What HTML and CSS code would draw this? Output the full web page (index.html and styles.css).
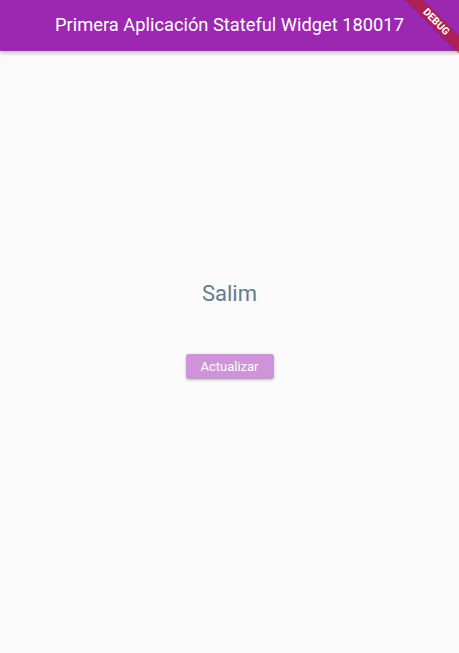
FILE: index.html
```html
<!DOCTYPE html>
<html lang="es">
<head>
<meta charset="utf-8">
<title>Primera Aplicación Stateful Widget 180017</title>
<link rel="stylesheet" href="styles.css">
</head>
<body>
<div class="app">
  <header class="appbar">
    <h1 class="title">Primera Aplicación Stateful Widget 180017</h1>
  </header>
  <main class="content">
    <p class="name">Salim</p>
    <button class="btn" type="button">Actualizar</button>
  </main>
  <div class="banner"><span>DEBUG</span></div>
</div>
</body>
</html>
```
FILE: styles.css
```css
* { box-sizing: border-box; }
html, body {
  margin: 0;
  padding: 0;
  height: 100%;
}
body {
  background: #fafafa;
  font-family: Roboto, "Noto Sans", sans-serif;
  overflow: hidden;
}
.app {
  position: relative;
  width: 459px;
  height: 653px;
  display: flex;
  flex-direction: column;
  overflow: hidden;
}
.appbar {
  height: 51px;
  flex: 0 0 51px;
  background: #9c27b0;
  display: flex;
  align-items: center;
  justify-content: center;
  box-shadow: 0 2px 4px rgba(0,0,0,0.25);
  position: relative;
  z-index: 1;
}
.title {
  margin: 0;
  color: #fff;
  font-weight: 400;
  font-size: 18.3px;
  line-height: 1;
}
.content {
  flex: 1;
  display: flex;
  flex-direction: column;
  align-items: center;
  padding-top: 230px;
}
.name {
  margin: 0;
  font-size: 22px;
  line-height: 26px;
  color: #607d8b;
}
.btn {
  margin-top: 47px;
  width: 88px;
  height: 25px;
  border: 0;
  border-radius: 3px;
  background: #ce93d8;
  color: #fff;
  font-family: Roboto, sans-serif;
  font-size: 13px;
  padding: 0;
  box-shadow: 0 1px 3px rgba(0,0,0,0.25);
}
.banner {
  position: absolute;
  left: 396px;
  top: 16px;
  width: 80px;
  height: 12px;
  background: rgba(183, 28, 28, 0.63);
  transform: rotate(45deg);
  display: flex;
  align-items: center;
  justify-content: center;
  z-index: 2;
  box-shadow: 0 0 2px rgba(0,0,0,0.2);
}
.banner span {
  color: #fff;
  font-size: 10.2px;
  font-weight: 700;
  line-height: 1;
}
```
